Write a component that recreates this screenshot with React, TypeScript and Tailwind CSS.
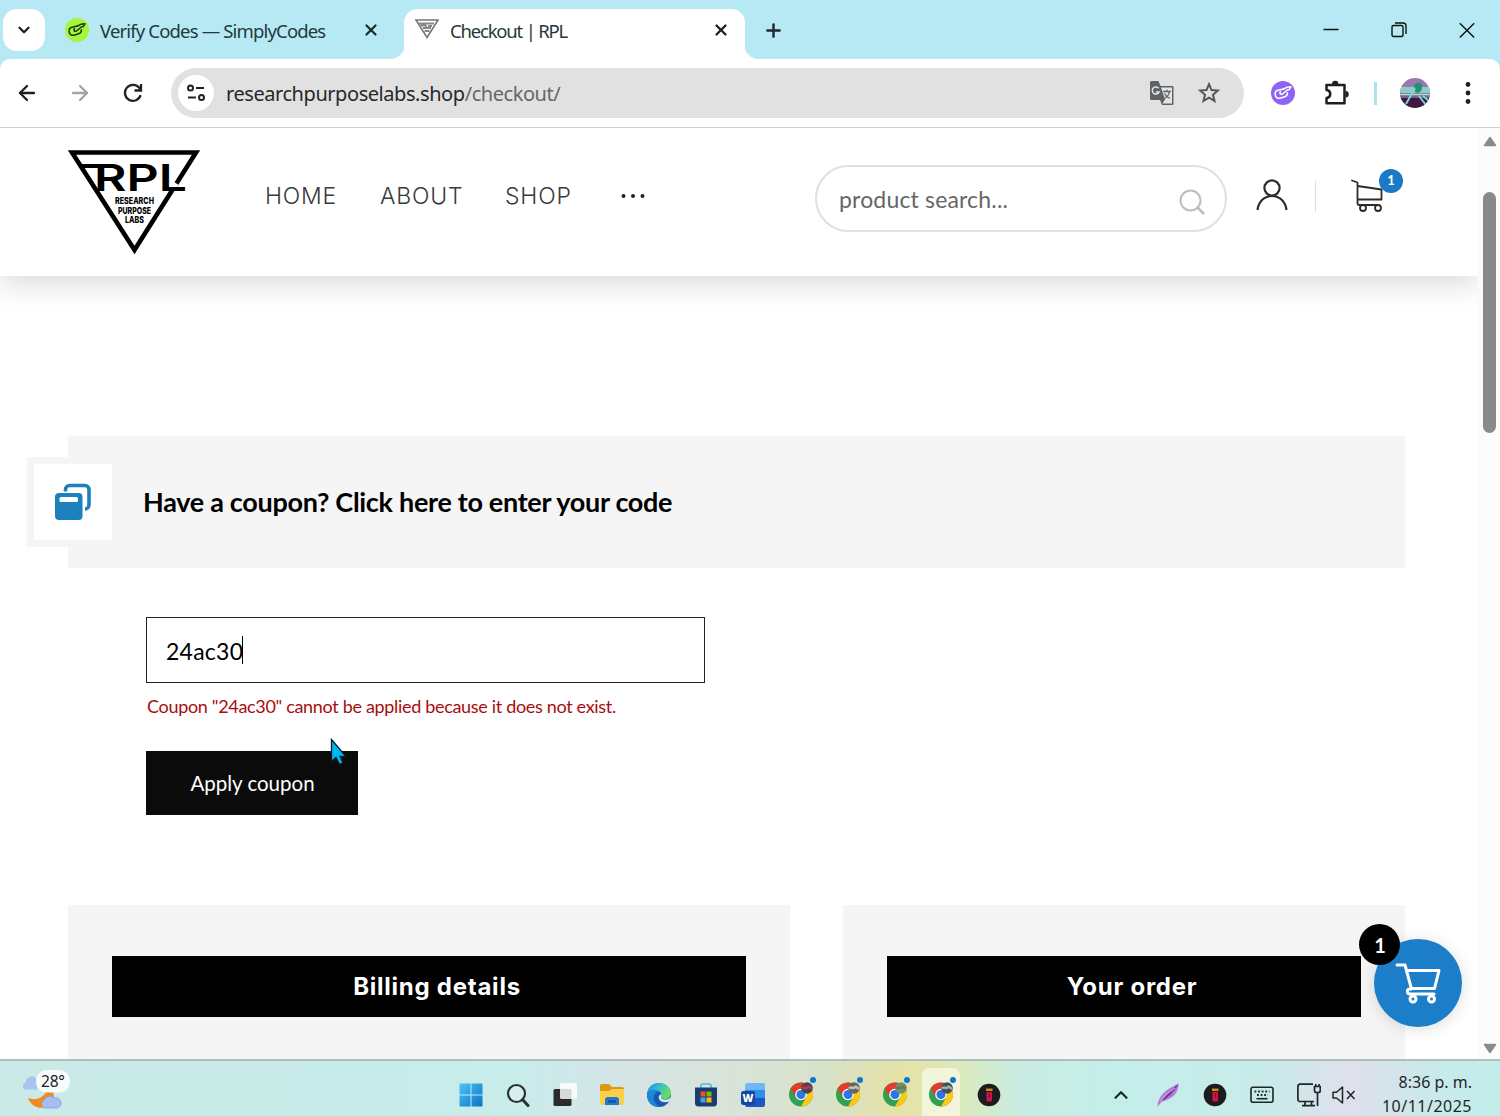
import { JSX, ReactNode } from "react";
import { ArrowLeft, ArrowRight, ChevronDown, ChevronUp, Plus, X } from "lucide-react";

/* ---------------- TYPES ---------------- */

interface IconProps {
  className?: string;
}

interface PanelProps {
  title: string;
  className: string;
}

interface ChromeProps {
  avatar: string;
  accent: string;
}

/* ---------------- BROWSER ICONS ---------------- */

function CodesMark({ className }: IconProps): JSX.Element {
  return (
    <svg viewBox="0 0 24 24" className={className} fill="none" stroke="currentColor" strokeWidth="1.5" strokeLinecap="round" strokeLinejoin="round">
      <path d="M12.500 8 7 9.300C4.500 10 3.700 12 4.300 14.200c.6 2.500 2.300 3.600 4.600 3l4.800-1.400c2-.6 2.900-2 2.700-4" />
      <path d="M9.500 10.500c-1.500 1.500 0 3.500 2 2.500l5.500-4.500M12.500 8l3.300-1.700 4.200-.5-2 3" />
    </svg>
  );
}

function MiniTriangle(): JSX.Element {
  return (
    <svg viewBox="0 0 24 20" className="h-5 w-6" fill="none" stroke="#777" strokeWidth="1.6">
      <path d="M1 1h22L12 18.500z" />
      <path d="M4 4.500h15M5.500 6.500h5l1 2M13 7h4M8 9h8M9.500 12h5" stroke="#888" strokeWidth="1.900" />
    </svg>
  );
}

function TabFlare({ className }: IconProps): JSX.Element {
  return (
    <svg viewBox="0 0 15 15" className={className} fill="#fff">
      <path d="M15 0v15H0C8.300 15 15 8.300 15 0z" />
    </svg>
  );
}

function Reload(): JSX.Element {
  return (
    <svg viewBox="0 0 20 20" className="size-5" fill="none" stroke="#222" strokeWidth="2.3">
      <path d="M17.600 12.200A8 8 0 1 1 16 4.600L17.600 6.600" />
      <path d="M18 1v6.500h-6.500" />
    </svg>
  );
}

function Tune(): JSX.Element {
  return (
    <svg viewBox="0 0 20 18" className="h-[18px] w-5" fill="none" stroke="#222" strokeWidth="2">
      <circle cx="4.500" cy="4" r="2.500" />
      <path d="M10 4h8M2 13.500h8" />
      <circle cx="15.500" cy="13.500" r="2.500" />
    </svg>
  );
}

function Translate(): JSX.Element {
  return (
    <svg viewBox="0 0 26 26" className="size-[26px]">
      <path d="M2.500 1h7l2 5h11.700a1.300 1.300 0 0 1 1.300 1.300v16.400a1.300 1.300 0 0 1-1.300 1.300H13l-2-5H2.500A1.500 1.500 0 0 1 1 18.500v-16A1.500 1.500 0 0 1 2.500 1z" fill="#5f6264" />
      <path d="M12 7.500h11v16h-9.500l2.500-4z" fill="#e4e4e4" />
      <path d="M9.700 8.200A3.600 3.600 0 1 0 10.200 12H6.800" fill="none" stroke="#e4e4e4" strokeWidth="1.500" />
      <path d="M14 11.500h8M18 9.800v1.700M20.500 11.500c-.5 3-2.500 5.500-5 7M15.500 13.500c1 2.300 3 4 5.500 5" fill="none" stroke="#5f6264" strokeWidth="1.300" />
    </svg>
  );
}

function Star(): JSX.Element {
  return (
    <svg viewBox="0 0 22 22" className="size-[22px]" fill="none" stroke="#555" strokeWidth="2">
      <path d="M11 2.200l2.500 5.900 6.400.5-4.900 4.200 1.500 6.200L11 15.700l-5.500 3.300L7 12.800 2.100 8.600l6.400-.5z" />
    </svg>
  );
}

function Puzzle(): JSX.Element {
  return (
    <svg viewBox="0 0 26 26" className="size-[26px]">
      <path d="M3.500 5h18v18.300h-18v-5.300c5-.6 5-7.400 0-8z" fill="none" stroke="#1f1f1f" strokeWidth="2.500" strokeLinejoin="round" />
      <path d="M9 4a3.200 3.200 0 0 1 6.400 0zM22.500 11a3.200 3.200 0 0 1 0 6.400z" fill="#1f1f1f" />
    </svg>
  );
}

function ProfilePhoto(): JSX.Element {
  return (
    <svg viewBox="0 0 30 30" className="size-[30px] rounded-full">
      <rect width="30" height="30" fill="#9b78b0" />
      <rect y="9" width="30" height="6" fill="#8ccdc4" />
      <rect y="15" width="30" height="5" fill="#75628f" />
      <path d="M0 16.500h30" stroke="#b5ded8" strokeWidth="1.300" />
      <rect y="20" width="30" height="10" fill="#43173f" />
      <path d="M14 7c3-4 9-3 8 2 0 5-4 7-7 5z" fill="#24936f" />
      <path d="M15 10 6 26M19 18l7 9M23 18l6 5" stroke="#77dad4" strokeWidth="2" />
    </svg>
  );
}

/* ---------------- SHOP ICONS ---------------- */

function Logo(): JSX.Element {
  return (
    <svg viewBox="0 0 132 104" className="h-[104px] w-[132px]">
      <path d="M4 2.500h124L66.500 100z" fill="none" stroke="#000" strokeWidth="4.600" />
      {/* gap where the wordmark crosses the right edge */}
      <path d="M103.500 38 107 32.500" stroke="#fff" strokeWidth="8" />
      <path d="M13 16h22" stroke="#000" strokeWidth="4" fill="none" />
      <g fontFamily="Inter, sans-serif" textAnchor="start">
        <text x="26" y="41" fontSize="37" fontWeight="600" textLength="93" lengthAdjust="spacingAndGlyphs">RPL</text>
        <g fontSize="9.600" fontWeight="800">
          <text x="47" y="54" textLength="39" lengthAdjust="spacingAndGlyphs">RESEARCH</text>
          <text x="50" y="63.500" textLength="33" lengthAdjust="spacingAndGlyphs">PURPOSE</text>
          <text x="57" y="73" textLength="19" lengthAdjust="spacingAndGlyphs">LABS</text>
        </g>
      </g>
    </svg>
  );
}

function HeaderCart(): JSX.Element {
  return (
    <svg viewBox="0 0 32 34" className="h-[34px] w-8" fill="none" stroke="#2c2c2c" strokeWidth="1.800" strokeLinecap="round" strokeLinejoin="round">
      <path d="M1 1.500l5.500 2V24a2 2 0 0 0 2 2H27a3 3 0 1 1-3 3 3 3 0 0 1 3-3M6.500 7 30.500 10.500V20.500H6.500" />
      <circle cx="12" cy="29" r="3" />
    </svg>
  );
}

function FloatingCart(): JSX.Element {
  return (
    <svg viewBox="0 0 46 42" className="h-[42px] w-[46px]" fill="none" stroke="#fff" strokeWidth="3" strokeLinecap="round" strokeLinejoin="round">
      <path d="M2 3h8l6.500 24M12 8.500h32l-4.500 18H16M15 27c-3.500 0-3.500 5 0 5h24" />
      <circle cx="18" cy="37" r="3" />
      <circle cx="36.500" cy="37" r="3" />
    </svg>
  );
}

function CouponIcon(): JSX.Element {
  return (
    <svg viewBox="0 0 38 38" className="size-[38px]">
      <path d="M11.500 8.500V6.500a4 4 0 0 1 4-4H31a4 4 0 0 1 4 4V22a4 4 0 0 1-4 4" fill="none" stroke="#1c80bd" strokeWidth="3.600" />
      <rect x="1" y="10" width="27.500" height="27" rx="4" fill="#1c80bd" />
      <rect x="5.500" y="14" width="18.500" height="5" rx="1.500" fill="#fff" />
    </svg>
  );
}

function Pointer({ className }: IconProps): JSX.Element {
  return (
    <svg viewBox="0 0 18 28" className={className}>
      <path d="M1.500 1.500v22l4.500-4 3.500 7 3.500-1.700-3-6.300h6z" fill="#00b7f5" stroke="#0b1a22" strokeWidth="1.300" />
    </svg>
  );
}

/* ---------------- TASKBAR ICONS ---------------- */

function Weather(): JSX.Element {
  return (
    <svg viewBox="0 0 48 42" className="h-[42px] w-12">
      <path d="M3 19.500a4 4 0 0 1 1-7.500 6 6 0 0 1 11-3v10.500z" fill="#a9c4f0" />
      <path d="M30 20a13 13 0 0 1-1 15c-9 6-20 2-23-7 8 3 16 0 19-8z" fill="#f08a1d" />
      <path d="M22 38a4.500 4.500 0 0 1 0-8 7 7 0 0 1 11-2 5 5 0 0 1 2 10z" fill="#a7bdf0" stroke="#7f9fe0" strokeWidth=".8" />
      <rect x="14" y="0" width="34" height="22.500" rx="11" fill="#f6fbfb" />
      <text x="19" y="17" fontFamily="Noto Sans, sans-serif" fontSize="15.500" fill="#1d1d1d" textLength="24">28°</text>
    </svg>
  );
}

function Windows(): JSX.Element {
  return (
    <svg viewBox="0 0 24 24" className="size-6">
      <defs>
        <linearGradient id="win" x1="0" y1="0" x2="1" y2="1">
          <stop offset="0" stopColor="#4cc4f5" />
          <stop offset="1" stopColor="#0a72cc" />
        </linearGradient>
      </defs>
      <path d="M1 .5h10.500v11H.5V1zM12.500.5H23l.5.500v10.500h-11zM.5 12.500h11v11H1l-.5-.5zM12.500 12.500h11V23l-.5.500H12.500z" fill="url(#win)" />
    </svg>
  );
}

function TaskSearch(): JSX.Element {
  return (
    <svg viewBox="0 0 24 24" className="size-6" fill="none" stroke="#2a2f30">
      <circle cx="10.500" cy="10.500" r="8.500" strokeWidth="2.200" fill="#d8eeed" />
      <path d="M16.500 16.500 22 22.500" strokeWidth="3" strokeLinecap="round" />
    </svg>
  );
}

function TaskView(): JSX.Element {
  return (
    <svg viewBox="0 0 24 24" className="size-6">
      <rect x=".5" y="6" width="18" height="17" rx="1.500" fill="#2b2b2b" />
      <rect x="7" y="0" width="17" height="16" rx="1.500" fill="#fff" opacity=".82" />
    </svg>
  );
}

function Folder(): JSX.Element {
  return (
    <svg viewBox="0 0 24 24" className="size-6">
      <path d="M0 3a2 2 0 0 1 2-2h7l3 3h10a2 2 0 0 1 2 2v5H0z" fill="#d99a14" />
      <path d="M0 8h9l3-2h12v14a2 2 0 0 1-2 2H2a2 2 0 0 1-2-2z" fill="#fcce4a" />
      <path d="M5 22v-5a3 3 0 0 1 3-3h8a3 3 0 0 1 3 3v5z" fill="#1f78c8" />
      <path d="M8 18.500h8" stroke="#0c4f93" strokeWidth="2" />
    </svg>
  );
}

function Edge(): JSX.Element {
  return (
    <svg viewBox="0 0 24 24" className="size-6">
      <defs>
        <linearGradient id="edgeTop" x1="0" y1="0" x2="1" y2=".4">
          <stop offset="0" stopColor="#2391d8" />
          <stop offset=".5" stopColor="#33bfd0" />
          <stop offset="1" stopColor="#6ddc5a" />
        </linearGradient>
      </defs>
      <circle cx="12" cy="12" r="12" fill="#145ab0" />
      <path d="M.200 10.500C1 4 6 0 12 0c7 0 12 5 12 10 0 4-3 6-6 6s-4-1-4-2c1-1 1-5-3-6-5-1-9 0-10.800 2.500z" fill="url(#edgeTop)" />
      <path d="M.2 10.500C3 6 9 6 12 8.500 8 9 6 13 7 17c.8 3 3 6 6 7C4 24.500-.5 18 .2 10.500z" fill="#1c86dc" />
      <path d="M14 11c-2 1-3 3-2 5 2 4 7 4 11.500 2 .5-2 .5-3 .5-4-2 2-4 2.500-6 2.500-3 0-4-1.500-4-2.500 1-1 .7-2 0-3z" fill="#d7e6e7" />
    </svg>
  );
}

function Store(): JSX.Element {
  return (
    <svg viewBox="0 0 24 24" className="size-6">
      <path d="M7 5V2.500A1.500 1.500 0 0 1 8.500 1h7A1.500 1.500 0 0 1 17 2.500V5" fill="none" stroke="#40bfe8" strokeWidth="1.700" />
      <path d="M1 4.500h22V20a3.500 3.500 0 0 1-3.500 3.500h-15A3.500 3.500 0 0 1 1 20z" fill="#1b3c70" />
      <path d="M6.500 8.500h5v5h-5z" fill="#f25022" />
      <path d="M12.500 8.500h5v5h-5z" fill="#7fba00" />
      <path d="M6.500 14.500h5v5h-5z" fill="#35a7ee" />
      <path d="M12.500 14.500h5v5h-5z" fill="#ffb900" />
    </svg>
  );
}

function Word(): JSX.Element {
  return (
    <svg viewBox="0 0 24 24" className="size-6">
      <path d="M6 0h16a2 2 0 0 1 2 2v6H4V3a3 3 0 0 1 2-3z" fill="#6fb8f8" />
      <rect x="4" y="7" width="20" height="9" fill="#2f8fec" />
      <path d="M4 15h20v7a2 2 0 0 1-2 2H6a2 2 0 0 1-2-2z" fill="#1a56c4" />
      <rect x="0" y="8" width="14" height="14" rx="2.500" fill="#1546a0" />
      <text x="7" y="18.800" textAnchor="middle" fontFamily="Open Sans, sans-serif" fontSize="10.500" fontWeight="800" fill="#fff">W</text>
    </svg>
  );
}

function Chrome({ avatar, accent }: ChromeProps): JSX.Element {
  return (
    <svg viewBox="0 0 30 30" className="size-[30px]">
      <circle cx="14" cy="17.500" r="12" fill="#30a052" />
      <path d="M3.600 11.500A12 12 0 0 1 24.400 11.500H14l-5 9z" fill="#e33b2e" />
      <path d="M24.400 11.500A12 12 0 0 1 14 29.500l5.300-9.500-.5-8.500z" fill="#fbc916" />
      <circle cx="14" cy="17.500" r="5.800" fill="#fff" />
      <circle cx="14" cy="17.500" r="4.500" fill="#2a78e4" />
      <circle cx="20" cy="11" r="5.800" fill={avatar} />
      <path d="M15 11.500c2-3 4 1 5.500-1s3 1 4.500 1" stroke={accent} strokeWidth="2.500" fill="none" />
      <circle cx="26" cy="3" r="3" fill="#0b78cf" />
    </svg>
  );
}

function Recorder(): JSX.Element {
  return (
    <svg viewBox="0 0 24 24" className="size-6">
      <circle cx="12" cy="12" r="11.300" fill="#1d1b1c" />
      <path d="M9 5.500h6.500v2.500H9z" fill="#c98a18" />
      <path d="M9.500 9h5.500v8a1.500 1.500 0 0 1-1.500 1.500H11a1.500 1.500 0 0 1-1.500-1.500z" fill="#d0124f" />
      <path d="M12.500 10.500v4" stroke="#6b0a2a" strokeWidth="1.200" />
    </svg>
  );
}

function Feather(): JSX.Element {
  return (
    <svg viewBox="0 0 24 24" className="size-6">
      <path d="M1.500 23.500C2 13 9 7 22.500.5 23 10 16 16 6 18.500z" fill="#b07fd4" />
      <path d="M1.500 23.500C7 14 13 9 22.500.5 18 10 10 16 5 18.500z" fill="#7f35aa" />
      <path d="M4.500 18.500C9 12 13 9 19 5" stroke="#dcc5ee" strokeWidth="1" fill="none" />
    </svg>
  );
}

function TouchKeyboard(): JSX.Element {
  return (
    <svg viewBox="0 0 24 18" className="h-[18px] w-6" fill="none" stroke="#1f2626" strokeWidth="1.600">
      <rect x="1" y="1.200" width="22" height="15" rx="2" />
      <path d="M4.500 5.500h15M7 9h11" strokeWidth="1.800" strokeDasharray="1.800 1.800" />
      <path d="M6.500 12.700h11" />
    </svg>
  );
}

function Network(): JSX.Element {
  return (
    <svg viewBox="0 0 24 24" className="size-6" fill="none" stroke="#1f2626" strokeWidth="1.700">
      <path d="M16 1.200H3A2.200 2.200 0 0 0 .900 3.500v13A2.200 2.200 0 0 0 3 18.500h14M8 18.500v4M14.500 18.500v4M5 22.700h13M20.500 10v13" />
      <path d="M17.500 3.500v4a2 2 0 0 0 2 2h1.800a2 2 0 0 0 2-2v-4zM18.800 3.500V1M22 3.500V1" />
    </svg>
  );
}

function Muted(): JSX.Element {
  return (
    <svg viewBox="0 0 24 18" className="h-[18px] w-6" fill="none" stroke="#1f2626" strokeWidth="1.500" strokeLinejoin="round">
      <path d="M1 6.200h3.500L10.500 1v16L4.500 12H1z" />
      <path d="M15 5l7.500 8M22.500 5 15 13" />
    </svg>
  );
}

/* ---------------- LAYOUT PARTS ---------------- */

function TabBar(): JSX.Element {
  return (
    <div className="flex h-[59px] bg-[#b6e9f3] pt-[9px] text-[18.500px] text-[#25383d]">
      <div className="ml-[3px] flex size-[42px] items-center justify-center rounded-[14px] bg-white">
        <ChevronDown className="size-[18px] text-[#1f1f1f]" strokeWidth={3} />
      </div>
      <div className="ml-5 flex h-[42px] w-[325px] items-center">
        <CodesMark className="size-6 rounded-full bg-[#a5f53c] text-[#1c3a10]" />
        <span className="ml-[11px] w-[262px] whitespace-nowrap pt-0.5 tracking-[-0.84px]">Verify Codes — SimplyCodes</span>
        <X className="size-[18px] text-[#1f2a2d]" strokeWidth={3} />
      </div>
      <TabFlare className="-mr-px size-[15px] self-end" />
      <div className="flex h-[50px] w-[341px] rounded-t-[14px] bg-white pl-[11px]">
        <div className="pt-2.5">
          <MiniTriangle />
        </div>
        <div className="ml-[11px] flex h-[42px] items-center">
          <span className="w-[262px] pt-0.5 tracking-[-1.2px]">Checkout | RPL</span>
          <X className="size-[18px] text-[#1f1f1f]" strokeWidth={3} />
        </div>
      </div>
      <TabFlare className="-ml-px size-[15px] -scale-x-100 self-end" />
      <Plus className="mt-[11px] ml-[4px] size-[21px] text-[#1f2a2d]" strokeWidth={2.8} />
      <div className="mt-[11px] mr-[25px] ml-auto flex gap-[52px]">
        <svg viewBox="0 0 16 20" className="h-5 w-4">
          <path d="M.5 9.500h15" stroke="#111" strokeWidth="1.500" />
        </svg>
        <svg viewBox="0 0 16 20" className="h-5 w-4" fill="none" stroke="#111" strokeWidth="1.400">
          <rect x="1" y="5.500" width="11" height="11" rx="1.500" />
          <path d="M4 3h8a3 3 0 0 1 3 3v8" />
        </svg>
        <svg viewBox="0 0 16 20" className="h-5 w-4">
          <path d="M.8 3.200 15.200 17.600M15.200 3.200.800 17.600" stroke="#111" strokeWidth="1.400" />
        </svg>
      </div>
    </div>
  );
}

function Toolbar(): JSX.Element {
  return (
    <div className="bg-[#b6e9f3]">
      <div className="flex h-[69px] items-center rounded-t-[10px] border-b border-[#cfcfcf] bg-white">
        <ArrowLeft className="ml-[15px] size-6 text-[#1f1f1f]" strokeWidth={2.3} />
        <ArrowRight className="ml-[29px] size-6 text-[#a3a3a3]" strokeWidth={2.3} />
        <div className="ml-[31px]">
          <Reload />
        </div>
        <div className="ml-[28px] flex h-[50px] w-[1073px] items-center rounded-full bg-[#e1e1e1]">
          <div className="ml-[7px] flex size-9 items-center justify-center rounded-full bg-white">
            <Tune />
          </div>
          <p className="ml-3 pt-px text-[20px] tracking-[-0.44px] text-[#666]">
            <span className="text-[#26282b]">researchpurposelabs.shop</span>/checkout/
          </p>
          <div className="mr-6 ml-auto flex items-center gap-[23px]">
            <Translate />
            <Star />
          </div>
        </div>
        <CodesMark className="ml-[27px] size-6 rounded-full bg-[#8f63f4] text-white" />
        <div className="ml-7">
          <Puzzle />
        </div>
        <div className="ml-[25px] h-[23px] w-[2.500px] bg-[#a9e4ec]" />
        <div className="ml-[23px]">
          <ProfilePhoto />
        </div>
        <svg viewBox="0 0 6 24" className="ml-[35px] h-6 w-1.5" fill="#1f1f1f">
          <circle cx="3" cy="3.500" r="2.400" />
          <circle cx="3" cy="12" r="2.400" />
          <circle cx="3" cy="20.500" r="2.400" />
        </svg>
      </div>
    </div>
  );
}

function SiteHeader(): JSX.Element {
  return (
    <header className="relative flex h-[148px] shrink-0 bg-white pl-[68px] shadow-[0_6px_30px_rgba(0,0,0,0.17)]">
      <div className="pt-[22px]">
        <Logo />
      </div>
      <nav className="ml-[65px] flex pt-[51px] font-[Inter] text-[23px] leading-[34px] font-light tracking-[0.8px] text-[#3a3a3a]">
        <span className="w-[115px]">HOME</span>
        <span className="w-[125px]">ABOUT</span>
        <span className="w-[116px]">SHOP</span>
        <svg viewBox="0 0 24 6" className="mt-3.5 h-1.5 w-6" fill="#222">
          <circle cx="2.500" cy="3" r="2" />
          <circle cx="12" cy="3" r="2" />
          <circle cx="21.500" cy="3" r="2" />
        </svg>
      </nav>
      <div className="mt-[37px] ml-[170px] flex h-[67px] w-[412px] items-center justify-between rounded-full border-2 border-[#e0e0e0] pr-5 pl-[22px]">
        <span className="pt-0.5 font-[Lato] text-[23px] tracking-[0.17px] text-[#666]">product search...</span>
        <svg viewBox="0 0 26 26" className="mt-1.5 size-[26px]" fill="none" stroke="#bdbdbd" strokeWidth="2">
          <circle cx="11.500" cy="11.500" r="10" />
          <path d="M18.500 18.500l6.500 6.500" strokeWidth="2.500" />
        </svg>
      </div>
      <svg viewBox="0 0 32 32" className="mt-[51px] ml-[29px] size-8" fill="none" stroke="#2c2c2c" strokeWidth="2.200">
        <circle cx="16" cy="9" r="7.600" />
        <path d="M1.500 31c1-8.500 7-14 14.500-14s13.500 5.500 14.500 14" />
      </svg>
      <div className="mt-[53px] ml-[27px] h-[31px] w-px bg-[#ddd]" />
      <div className="relative mt-[51px] ml-[35px] h-9 w-8">
        <HeaderCart />
        <span className="absolute -top-[10px] left-7 flex size-6 items-center justify-center rounded-full bg-[#1a7ac5] font-[Lato] text-[13px] font-bold text-white">1</span>
      </div>
    </header>
  );
}

function Panel({ title, className }: PanelProps): JSX.Element {
  return (
    <section className={className}>
      <h2 className="flex h-[61px] items-center justify-center bg-black pl-4 font-[Inter] text-[24px] font-bold tracking-[0.75px] text-white">{title}</h2>
    </section>
  );
}

function CouponForm(): JSX.Element {
  return (
    <div className="mt-[49px] ml-[146px] font-[Lato]">
      <div className="flex h-[66px] w-[559px] items-center border-[1.500px] border-[#222] pl-[19px] text-[23px] text-black">
        <span className="pt-0.5 tracking-[0.25px]">24ac30</span>
        <span className="-ml-px h-7 w-px bg-black" />
      </div>
      <p className="mt-[11px] ml-px h-6 text-[18px] leading-6 tracking-[-0.32px] text-[#a80d0d]">Coupon "24ac30" cannot be applied because it does not exist.</p>
      <div className="relative mt-[33px] w-[212px]">
        <button className="block h-16 w-full bg-[#0b0b0b] pl-px text-[20.500px] text-white">Apply coupon</button>
        <Pointer className="absolute -top-[13px] left-[184px] h-7 w-[18px]" />
      </div>
    </div>
  );
}

function Scrollbar(): JSX.Element {
  return (
    <div className="flex w-[22px] flex-col items-center border-l border-[#f7f7f7] bg-[#fcfcfc] pt-2">
      <svg viewBox="0 0 14 11" className="h-[11px] w-3.5">
        <path d="M7 1.500 12.500 9.500H1.500z" fill="#8a8a8a" stroke="#8a8a8a" strokeWidth="1.500" strokeLinejoin="round" />
      </svg>
      <div className="mt-[45px] h-[241px] w-[13px] rounded-full bg-[#8a8a8a]" />
      <svg viewBox="0 0 14 11" className="mt-auto mb-[5px] h-[11px] w-3.5">
        <path d="M7 9.500 12.500 1.500H1.500z" fill="#8a8a8a" stroke="#8a8a8a" strokeWidth="1.500" strokeLinejoin="round" />
      </svg>
    </div>
  );
}

function TaskCell({ children, active }: { children: ReactNode; active?: boolean }): JSX.Element {
  return (
    <div className="flex h-full w-[47.100px] justify-center">
      <div className={active ? "mt-[7px] flex w-[38px] items-center justify-center rounded-t-[7px] bg-[#f3f5da] pl-0.5" : "flex items-center justify-center pt-[13px]"}>
        {children}
      </div>
    </div>
  );
}

function Taskbar(): JSX.Element {
  return (
    <footer className="flex h-[57px] border-t-2 border-[#aebfc0] bg-[linear-gradient(90deg,#c9eae7_0px,#c7ecea_520px,#d6e4e6_620px,#d9e3d6_750px,#d8e2c8_830px,#e6e2a5_900px,#dbeabd_960px,#c9ece2_1020px,#c4eeea_1120px,#c8ebea_1270px,#e0dfeb_1350px,#c9e9eb_1430px,#c2eeea_1500px)]">
      <div className="mt-[9px] ml-[22px]">
        <Weather />
      </div>
      <div className="ml-[377px] flex h-full">
        <TaskCell><Windows /></TaskCell>
        <TaskCell><TaskSearch /></TaskCell>
        <TaskCell><TaskView /></TaskCell>
        <TaskCell><Folder /></TaskCell>
        <TaskCell><Edge /></TaskCell>
        <TaskCell><Store /></TaskCell>
        <TaskCell><Word /></TaskCell>
        <div className="-mt-1.5 -mr-0.5 ml-0.5 flex">
          <TaskCell><Chrome avatar="#4b4350" accent="#b03a52" /></TaskCell>
          <TaskCell><Chrome avatar="#6b645e" accent="#c9c3bd" /></TaskCell>
          <TaskCell><Chrome avatar="#5b9b7a" accent="#8c6c3c" /></TaskCell>
        </div>
        <TaskCell active><Chrome avatar="#4c4a5e" accent="#8fb8ae" /></TaskCell>
        <TaskCell><Recorder /></TaskCell>
      </div>
      <div className="ml-[85px] flex h-full">
        <TaskCell><ChevronUp className="size-[22px] text-[#1f2626]" strokeWidth={2.4} /></TaskCell>
        <TaskCell><Feather /></TaskCell>
        <TaskCell><Recorder /></TaskCell>
        <TaskCell><TouchKeyboard /></TaskCell>
      </div>
      <div className="ml-[11px] flex items-center gap-[11px] pt-[13px]">
        <Network />
        <Muted />
      </div>
      <div className="mt-[9px] mr-7 ml-auto text-right text-[16px] leading-6 text-[#1f2626]">
        <p>8:36 p. m.</p>
        <p className="whitespace-nowrap tracking-[0.5px]">10/11/2025</p>
      </div>
    </footer>
  );
}

/* ---------------- PAGE ---------------- */

export default function App(): JSX.Element {
  return (
    <div className="relative flex h-[1116px] w-[1500px] flex-col overflow-hidden bg-white font-['Noto_Sans',sans-serif]">
      <TabBar />
      <Toolbar />

      <div className="flex h-[931px]">
        <main className="flex w-[1478px] flex-col overflow-hidden">
          <SiteHeader />

          <div className="mt-[160px] ml-[68px] flex h-[132px] w-[1337px] shrink-0 items-center bg-[#f5f5f5]">
            <div className="-ml-[41px] flex h-[90px] w-[85px] items-center justify-center border-[7px] border-r-0 border-[#f5f5f5] bg-white">
              <CouponIcon />
            </div>
            <p className="ml-[31px] font-[Lato] text-[27px] font-bold tracking-[-0.3px] text-black">Have a coupon? Click here to enter your code</p>
          </div>

          <CouponForm />

          <div className="mt-[90px] ml-[68px] flex flex-1 gap-[53px]">
            <Panel title="Billing details" className="w-[722px] bg-[#f5f5f5] px-11 pt-[51px]" />
            <Panel title="Your order" className="w-[562px] bg-[#f5f5f5] px-11 pt-[51px]" />
          </div>
        </main>
        <Scrollbar />
      </div>

      <Taskbar />

      {/* Floating cart button */}
      <div className="absolute top-[939px] left-[1374px] flex size-[88px] items-center justify-center rounded-full bg-[#1c7dc8] shadow-[0_2px_16px_rgba(0,0,0,0.14)]">
        <FloatingCart />
        <span className="absolute -top-[15px] -left-[15px] flex size-[41px] items-center justify-center rounded-full bg-black pl-px font-[Lato] text-[20px] font-bold text-white">1</span>
      </div>
    </div>
  );
}
